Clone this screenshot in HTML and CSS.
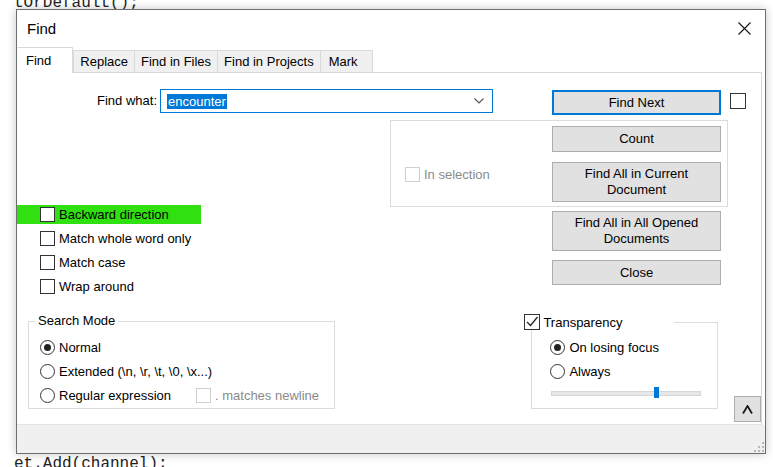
FILE: index.html
```html
<!DOCTYPE html>
<html lang="en">
<head>
    <meta charset="UTF-8">
    <title>Find</title>
    <link rel="stylesheet" href="styles.css">
</head>
<body>
    <!-- editor text behind the dialog -->
    <div class="editor">
        <div class="code-line first">tOrDefault();</div>
        <div class="code-line last">et.Add(channel);</div>
    </div>

    <div class="dialog">
        <div class="titlebar">
            <span class="title">Find</span>
            <svg class="close" width="13" height="13" viewBox="0 0 13 13">
                <path d="M0.5 0.5 L12.5 12.5 M12.5 0.5 L0.5 12.5" stroke="#111" stroke-width="1.1" fill="none"/>
            </svg>
        </div>

        <div class="tabs">
            <div class="tab active">Find</div>
            <div class="tab">Replace</div>
            <div class="tab">Find in Files</div>
            <div class="tab">Find in Projects</div>
            <div class="tab tab-last">Mark</div>
        </div>

        <div class="page">
            <div class="row-find">
                <label class="what">Find what:</label>
                <div class="combo">
                    <span class="selected">encounter</span>
                    <svg width="10" height="6" viewBox="0 0 10 6">
                        <path d="M0.5 0.5 L5 5 L9.5 0.5" stroke="#555" stroke-width="1.1" fill="none"/>
                    </svg>
                </div>
                <button class="btn btn-next">Find Next</button>
                <span class="cb cb-big"></span>
            </div>

            <div class="sel-group">
                <div class="sel-opt"><span class="cb dis"></span>In selection</div>
                <div class="stack stack-a">
                    <button class="btn h26">Count</button>
                    <button class="btn h40">Find All in Current<br>Document</button>
                </div>
            </div>

            <div class="mid">
                <div class="options">
                    <div class="opt hl"><span class="cb"></span>Backward direction</div>
                    <div class="opt"><span class="cb"></span>Match whole word only</div>
                    <div class="opt"><span class="cb"></span>Match case</div>
                    <div class="opt"><span class="cb"></span>Wrap around</div>
                </div>
                <div class="stack stack-b">
                    <button class="btn h40">Find All in All Opened<br>Documents</button>
                    <button class="btn h25">Close</button>
                </div>
            </div>

            <div class="lower">
                <fieldset class="mode">
                    <legend>Search Mode</legend>
                    <div class="radios">
                        <div class="opt"><span class="rb on"></span>Normal</div>
                        <div class="opt"><span class="rb"></span>Extended (\n, \r, \t, \0, \x...)</div>
                        <div class="opt">
                            <span class="rb"></span><span class="re-label">Regular expression</span>
                            <span class="cb dis"></span><span class="dim">. matches newline</span>
                        </div>
                    </div>
                </fieldset>

                <fieldset class="transp">
                    <legend>
                        <span class="cb cb-big">
                            <svg width="14" height="14" viewBox="0 0 14 14">
                                <path d="M2 7 L5.5 10.5 L12.5 2" stroke="#222" stroke-width="1.2" fill="none"/>
                            </svg>
                        </span>Transparency
                    </legend>
                    <div class="radios">
                        <div class="opt"><span class="rb on"></span>On losing focus</div>
                        <div class="opt"><span class="rb"></span>Always</div>
                    </div>
                    <div class="slider"><span class="thumb"></span></div>
                </fieldset>

                <button class="btn collapse">
                    <svg width="11" height="9" viewBox="0 0 11 9">
                        <path d="M1 8.5 L5.5 1 L10 8.5" stroke="#1a1a1a" stroke-width="1.8" fill="none"/>
                    </svg>
                </button>
            </div>
        </div>

        <div class="band">
            <svg width="10" height="10" viewBox="0 0 10 10" fill="#b8b8b8">
                <rect x="8" y="0" width="2" height="2"/>
                <rect x="4" y="4" width="2" height="2"/>
                <rect x="8" y="4" width="2" height="2"/>
                <rect x="0" y="8" width="2" height="2"/>
                <rect x="4" y="8" width="2" height="2"/>
                <rect x="8" y="8" width="2" height="2"/>
            </svg>
        </div>
    </div>
</body>
</html>
```

FILE: styles.css
```css
body {
    margin: 0;
    width: 773px;
    height: 467px;
    position: relative;
    overflow: hidden;
    background: #fff;
    font-family: "Liberation Sans", Arial, sans-serif;
    font-size: 13px;
    color: #000;
}

/* code editor behind */
.editor {
    height: 467px;
    display: flex;
    flex-direction: column;
    justify-content: space-between;
    padding-left: 14px;
    font-family: "Liberation Mono", monospace;
    font-size: 16px;
    line-height: 19px;
    color: #222;
}
.code-line.first {
    margin-top: -6px;
}
.code-line.last {
    margin-bottom: -7px;
}

/* dialog window */
.dialog {
    position: absolute;
    left: 16px;
    top: 9px;
    width: 750px;
    height: 445px;
    box-sizing: border-box;
    border: 1px solid #6e6e6e;
    background: #fff;
    box-shadow: 0 0 9px rgba(0, 0, 0, 0.22);
    display: flex;
    flex-direction: column;
}
.titlebar {
    height: 36px;
    flex: none;
    display: flex;
    align-items: center;
    justify-content: space-between;
    padding: 0 14px 0 10px;
}
.title {
    font-size: 15px;
}

/* tabs */
.tabs {
    height: 26px;
    flex: none;
    display: flex;
    align-items: flex-end;
    border-bottom: 1px solid #d9d9d9;
    margin-right: 3px;
}
.tab {
    height: 21px;
    line-height: 21px;
    padding: 0 6px;
    border: 1px solid #d9d9d9;
    border-bottom: none;
    background: #f0f0f0;
    margin-left: -1px;
}
.tab.active {
    height: 25px;
    line-height: 25px;
    margin-left: 0;
    margin-bottom: -1px;
    padding: 0 21px 0 8px;
    background: #fff;
    border-left-color: #fff;
    position: relative;
    z-index: 1;
}
.tab.active + .tab {
    margin-left: 0;
}
.tab-last {
    padding: 0 14px 0 8px;
}

/* tab page */
.page {
    height: 351px;
    flex: none;
    margin-right: 3px;
    border-right: 1px solid #d9d9d9;
    border-bottom: 1px solid #e3e3e3;
}
.row-find {
    display: flex;
    align-items: flex-start;
    margin-top: 16px;
    height: 25px;
}
.what {
    width: 140px;
    margin-right: 3px;
    text-align: right;
    line-height: 24px;
}
.combo {
    width: 333px;
    height: 24px;
    box-sizing: border-box;
    border: 1px solid #0078d7;
    display: flex;
    align-items: center;
    justify-content: space-between;
    padding: 0 8px 0 6px;
}
.selected {
    background: #0078d7;
    color: #fff;
    line-height: 15px;
    padding: 0 1px;
}

.btn {
    width: 169px;
    box-sizing: border-box;
    background: #e1e1e1;
    border: 1px solid #adadad;
    font: inherit;
    color: #000;
    padding: 0;
    line-height: 16px;
}
.btn-next {
    margin: 1px 0 0 59px;
    height: 25px;
    border-color: #0078d7;
    box-shadow: inset 0 0 0 1px #0078d7;
}
.h25 { height: 25px; }
.h26 { height: 26px; }
.h40 { height: 40px; }

/* checkboxes and radios */
.cb {
    flex: none;
    width: 13px;
    height: 13px;
    border: 1px solid #333;
    background: #fff;
    display: inline-flex;
    align-items: center;
    justify-content: center;
}
.cb-big {
    width: 14px;
    height: 14px;
}
.row-find .cb-big {
    margin: 4px 0 0 9px;
}
.cb.dis {
    border-color: #cfcfcf;
}
.rb {
    flex: none;
    width: 13px;
    height: 13px;
    border: 1px solid #333;
    border-radius: 50%;
    display: flex;
    align-items: center;
    justify-content: center;
}
.rb.on::after {
    content: "";
    width: 7px;
    height: 7px;
    border-radius: 50%;
    background: #222;
}

/* in-selection group */
.sel-group {
    margin: 6px 0 0 373px;
    width: 338px;
    height: 87px;
    box-sizing: border-box;
    border: 1px solid #dcdcdc;
    display: flex;
}
.sel-opt {
    width: 161px;
    box-sizing: border-box;
    padding-left: 14px;
    margin-top: 46px;
    height: 15px;
    display: flex;
    align-items: center;
    gap: 4px;
    color: #8a8a8a;
}
.stack {
    display: flex;
    flex-direction: column;
}
.stack-a {
    gap: 10px;
    padding-top: 5px;
}
.stack-b {
    gap: 9px;
    padding-top: 6px;
}

/* options */
.mid {
    display: flex;
    margin-top: -2px;
}
.options {
    width: 535px;
    display: flex;
    flex-direction: column;
    gap: 5px;
}
.opt {
    display: flex;
    align-items: center;
    height: 19px;
    gap: 4px;
}
.options .opt {
    padding-left: 23px;
}
.hl {
    width: 184px;
    box-sizing: border-box;
    background: #30e010;
}

/* lower groups */
.lower {
    display: flex;
    align-items: flex-start;
    margin-top: 18px;
}
fieldset {
    margin: 0;
    box-sizing: border-box;
    border: 1px solid #dcdcdc;
}
.mode {
    margin-left: 11px;
    width: 308px;
    height: 95px;
    padding: 0 6px;
}
.mode legend {
    padding: 0 3px;
    line-height: 14px;
}
.radios {
    display: flex;
    flex-direction: column;
    margin-top: 7px;
}
.radios .opt {
    height: 24px;
}
.mode .radios {
    padding-left: 5px;
}
.re-label {
    width: 133px;
}
.dim {
    color: #8a8a8a;
}
.transp {
    margin-left: 196px;
    width: 187px;
    height: 95px;
    padding: 0 0 0 18px;
}
.transp legend {
    margin-left: -26px;
    width: 150px;
    height: 16px;
    padding: 0;
    display: flex;
    align-items: center;
    gap: 3px;
}
.transp .radios {
    margin-top: 5px;
}
.slider {
    position: relative;
    margin: 8px 0 0 1px;
    width: 148px;
    height: 3px;
    background: #e7e7e7;
    border: 1px solid #d6d6d6;
}
.thumb {
    position: absolute;
    left: 102px;
    top: -5px;
    width: 5px;
    height: 11px;
    background: #0078d7;
}
.collapse {
    width: 27px;
    height: 26px;
    margin: 82px 0 0 16px;
    display: flex;
    align-items: center;
    justify-content: center;
}

/* bottom band */
.band {
    flex: 1;
    background: #f0f0f0;
    display: flex;
    justify-content: flex-end;
    align-items: flex-end;
    padding: 0 1px 1px 0;
}
```
